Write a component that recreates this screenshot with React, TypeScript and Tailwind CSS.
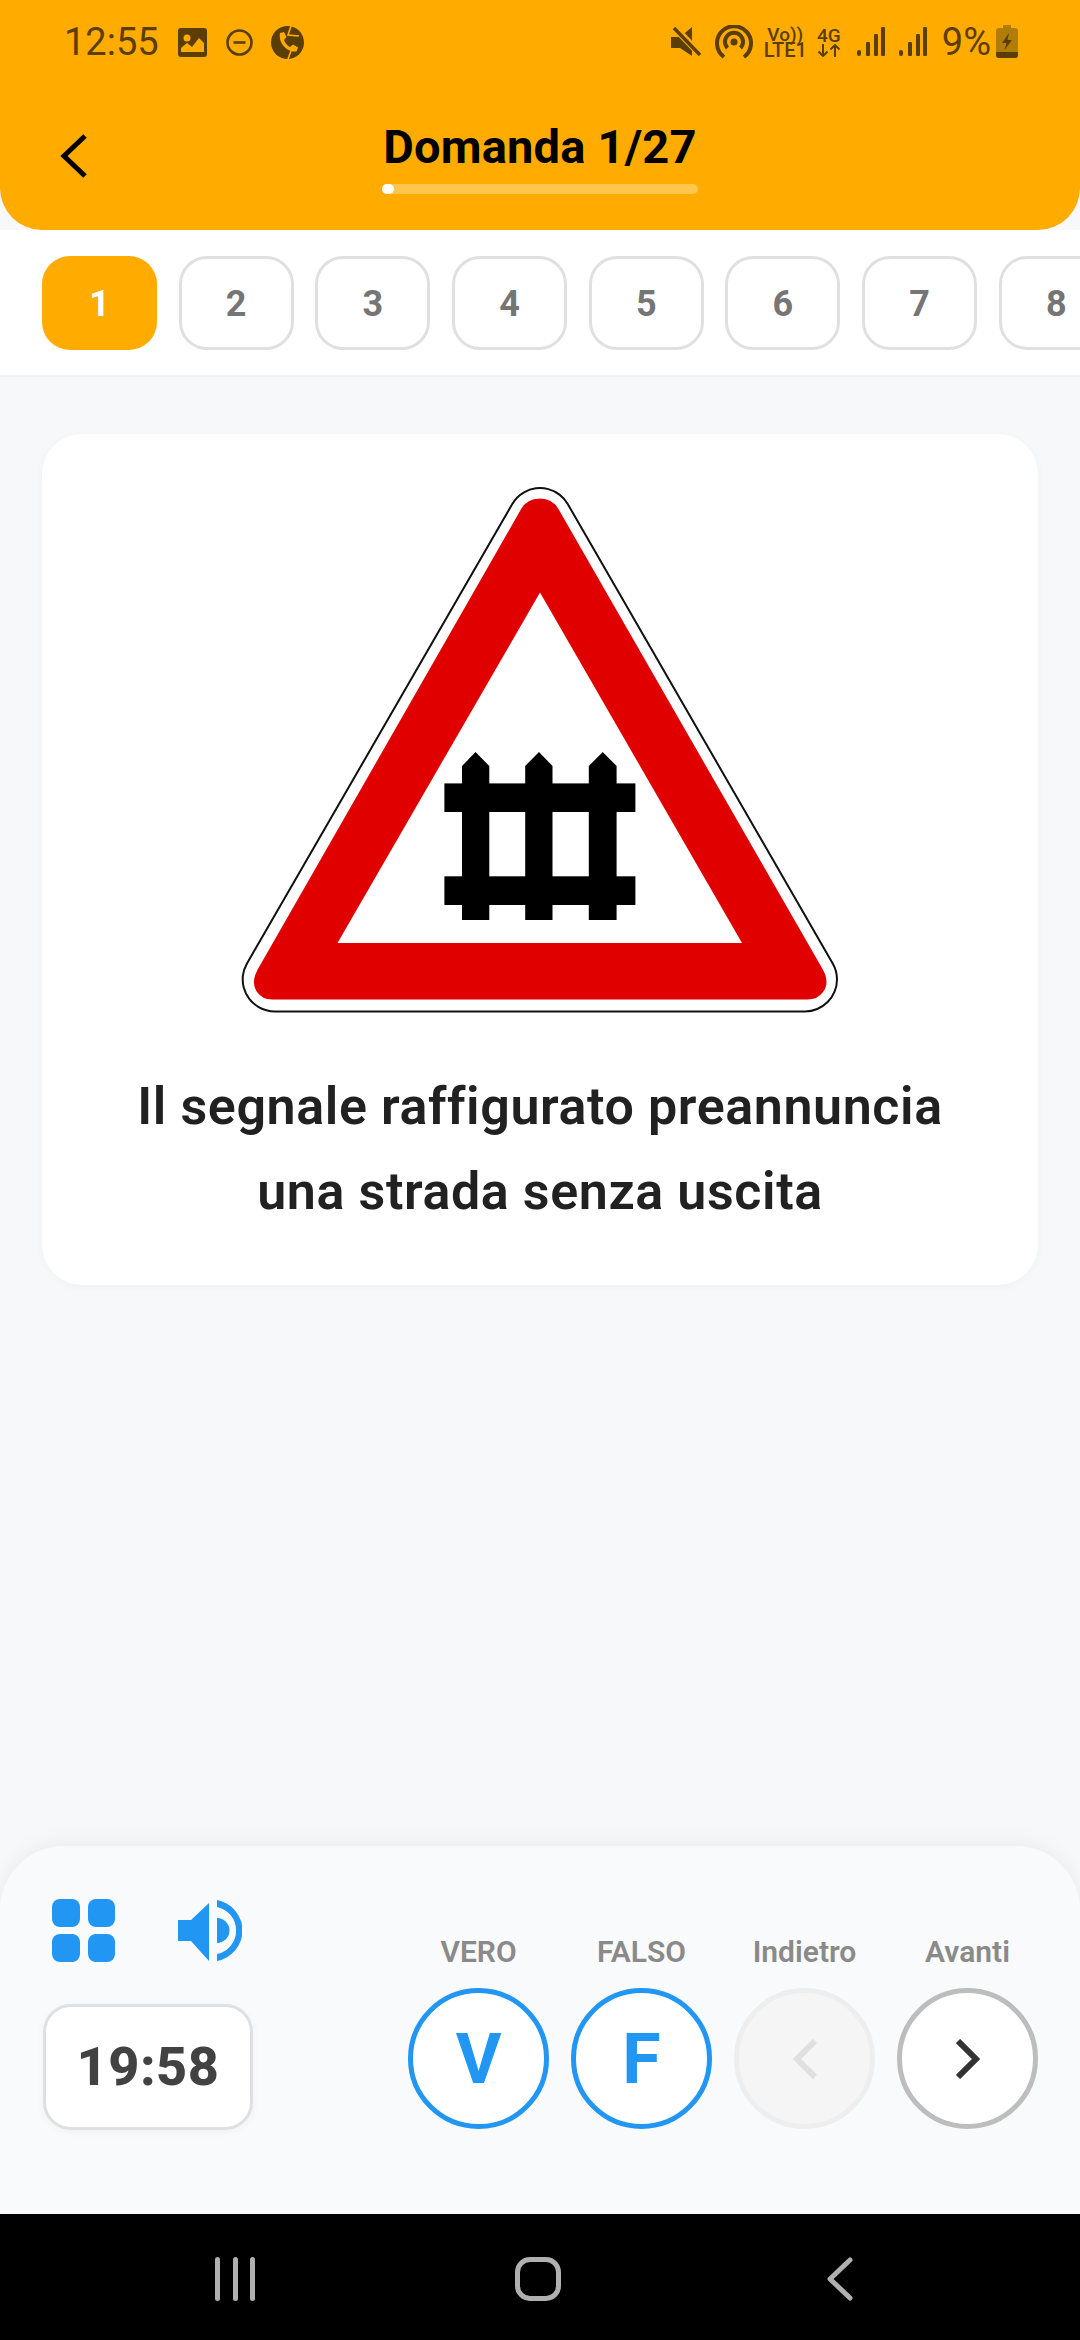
import { useState } from 'react';

const BROWN = '#5a3e06';
const BLUE = '#2196f3';
const tabs = [1, 2, 3, 4, 5, 6, 7, 8];

function Signal() {
  return (
    <svg width="28" height="30" viewBox="0 0 28 30" fill={BROWN}>
      <rect x="0" y="23" width="4" height="6" rx="2" />
      <rect x="9" y="15" width="4" height="14" rx="1" />
      <rect x="17" y="7" width="4" height="22" rx="1" />
      <rect x="24" y="0" width="4" height="29" rx="1" />
    </svg>
  );
}

function StatusBar() {
  return (
    <div className="flex h-[82px] items-center justify-between pl-[64px] pr-[62px] pt-[2px]">
      <div className="flex items-center">
        <span className="text-[38px] leading-none text-[#5a3e06]">12:55</span>
        <svg className="ml-[19px]" width="29" height="29" viewBox="0 0 29 29">
          <rect width="29" height="29" rx="3" fill={BROWN} />
          <circle cx="9" cy="10" r="3.5" fill="#ffab00" />
          <path d="M3 24 L3 20 L9 15 L14 19 L21 10 L26 15 L26 24 Z" fill="#ffab00" />
        </svg>
        <svg className="ml-[19px]" width="27" height="27" viewBox="0 0 27 27" fill="none" stroke={BROWN} strokeWidth="2.6">
          <circle cx="13.5" cy="13.5" r="12" />
          <path d="M7.5 13.5 H19.5" />
        </svg>
        <svg className="ml-[17px]" width="35" height="35" viewBox="0 0 33 35">
          <circle cx="16.5" cy="17.5" r="16.5" fill={BROWN} />
          <path d="M9 8 L13 7 L15.5 12 L13 15 C14 18 16 20.5 19 22 L22 19.5 L27 22.5 L25.5 26.5 C16 27.5 7 18 9 8 Z" fill="#ffab00" />
          <path d="M20 1 L17 10 L28 11 M17 34 L20 26" stroke="#ffab00" strokeWidth="1.6" fill="none" />
        </svg>
      </div>

      <div className="flex items-center">
        <svg width="30" height="30" viewBox="0 0 30 30">
          <path d="M0 10 H9 L21 0 V29 L9 21 H0 Z" fill={BROWN} />
          <path d="M3 0 L30 28" stroke="#ffab00" strokeWidth="7" />
          <path d="M3 1 L29 28" stroke={BROWN} strokeWidth="3.4" />
        </svg>
        <svg className="ml-[14px]" width="38" height="34" viewBox="0 0 38 34" fill="none" stroke={BROWN} strokeWidth="4">
          <path d="M9 32 A17 17 0 1 1 29 32" />
          <path d="M12.5 23 A9 9 0 1 1 25.5 23" />
          <circle cx="19" cy="17" r="3.5" fill={BROWN} stroke="none" />
        </svg>
        <div className="ml-[12px] flex w-[41px] flex-col items-center font-medium">
          <span className="text-[19px] leading-[15px] text-[#5a3e06]">Vo))</span>
          <span className="text-[20px] leading-[16px] text-[#5a3e06]">LTE1</span>
        </div>
        <div className="ml-[11px] flex w-[24px] flex-col items-center">
          <span className="text-[19px] font-medium leading-[16px] text-[#5a3e06]">4G</span>
          <svg width="24" height="13" viewBox="0 0 24 13" fill="none" stroke={BROWN} strokeWidth="2">
            <path d="M6 0 V12 M1.5 7.5 L6 12 L10.5 7.5" />
            <path d="M18 13 V1 M13.5 5.5 L18 1 L22.5 5.5" />
          </svg>
        </div>
        <div className="ml-[16px]"><Signal /></div>
        <div className="ml-[14px]"><Signal /></div>
        <span className="ml-[15px] text-[38px] leading-none text-[#5a3e06]">9%</span>
        <svg className="ml-[5px]" width="22" height="34" viewBox="0 0 22 34">
          <path d="M7 0 H15 V3 H19 Q22 3 22 6 V30 Q22 33 19 33 H3 Q0 33 0 30 V6 Q0 3 3 3 H7 Z" fill="#b07d08" />
          <path d="M0 27 H22 V30 Q22 33 19 33 H3 Q0 33 0 30 Z" fill={BROWN} />
          <path d="M13 8 L6 18 H10.5 L8.5 25 L16 15 H11.5 Z" fill={BROWN} />
        </svg>
      </div>
    </div>
  );
}

function Header() {
  return (
    <div className="relative h-[230px] shrink-0 rounded-b-[42px] bg-[#ffab00]">
      <StatusBar />
      <svg className="absolute left-[58px] top-[132px]" width="32" height="48" viewBox="0 0 32 48" fill="none" stroke="#000" strokeWidth="5">
        <path d="M27 4 L6 24 L27 44" />
      </svg>
      <div className="mt-[38px] flex flex-col items-center">
        <span className="text-[47px] font-bold leading-[54px] tracking-[0.2px] text-black">Domanda 1/27</span>
        <div className="mt-[10px] h-[10px] w-[316px] rounded-full bg-[#ffc64f]">
          <div className="h-full w-[12px] rounded-full bg-white" />
        </div>
      </div>
    </div>
  );
}

function QuestionTabs({ active, onPick }: { active: number; onPick: (n: number) => void }) {
  return (
    <div className="flex h-[147px] shrink-0 items-start gap-[21.7px] overflow-hidden border-b-2 border-[#f1f2f4] bg-white pl-[42px] pt-[26px]">
      {tabs.map((n) => (
        <button
          key={n}
          onClick={() => onPick(n)}
          className={`flex h-[94px] w-[115px] shrink-0 items-center justify-center rounded-[28px] pt-[2px] text-[36px] font-bold ${
            n === active ? 'bg-[#ffab00] text-white' : 'border-[3px] border-[#e0e0e0] bg-white text-[#757575]'
          }`}
        >
          {n}
        </button>
      ))}
    </div>
  );
}

function RoadSign() {
  // outline is concentric round corners, the red part has its own tighter corners
  const tri = '34.7,494.4 565,494.4 300,35';
  const red =
    'M17.5 484.8 L281 24.3 Q287 13.6 300 13.6 Q312.6 13.6 318.6 24.3 L583 484.8 Q590 498 583 507 Q578 514.4 567.5 514.4 L32 514.4 Q22 514.4 17 507 Q10.5 498 17.5 484.8 Z';
  return (
    <svg className="mx-auto block" width="600" height="530" viewBox="0 0 600 530">
      <polygon points={tri} fill="#111" stroke="#111" strokeWidth="66" strokeLinejoin="round" />
      <polygon points={tri} fill="#fff" stroke="#fff" strokeWidth="62" strokeLinejoin="round" />
      <path d={red} fill="#e00000" />
      <polygon points="97.5,458 502,458 300,107.5" fill="#fff" />
      <g fill="#000">
        <rect x="204.4" y="298.4" width="191" height="28.6" />
        <rect x="204.4" y="391.3" width="191" height="28.7" />
        <path d="M222 281 L235.5 267 L249.3 281 V435 H222 Z" />
        <path d="M285.2 281 L299 267 L312.5 281 V435 H285.2 Z" />
        <path d="M348.8 281 L362.7 267 L376.6 281 V435 H348.8 Z" />
      </g>
    </svg>
  );
}

function RoundButton({ label, children, className }: { label: string; children: React.ReactNode; className: string }) {
  return (
    <div className="flex w-[141px] flex-col items-center">
      <span className="whitespace-nowrap text-[30px] font-semibold leading-[33px] text-[#8a8a8a]">{label}</span>
      <div className={`mt-[20px] flex h-[141px] w-[141px] items-center justify-center rounded-full border-[5px] ${className}`}>
        {children}
      </div>
    </div>
  );
}

function BottomPanel() {
  return (
    <div className="flex h-[368px] shrink-0 justify-between rounded-t-[64px] bg-[#f9fafb] pl-[43px] pr-[42px] shadow-[0_-4px_20px_rgba(0,0,0,0.05)]">
      <div className="flex flex-col pt-[53px]">
        <div className="flex items-center pl-[9px]">
          <svg width="63" height="63" viewBox="0 0 63 63" fill={BLUE}>
            <rect x="0" y="0" width="28" height="28" rx="8" />
            <rect x="36" y="0" width="27" height="28" rx="8" />
            <rect x="0" y="35" width="28" height="28" rx="8" />
            <rect x="36" y="35" width="27" height="28" rx="8" />
          </svg>
          <svg className="ml-[63px]" width="64" height="63" viewBox="0 0 64 63" fill={BLUE}>
            <path d="M0 21 H13 L31 4 V62 L13 42 H0 Z" />
            <path d="M39 19 A12.5 12.5 0 0 1 39 44 Z" />
            <path d="M39 1 A31 31 0 0 1 39 62 V55 A24 24 0 0 0 39 8 Z" />
          </svg>
        </div>
        <div className="mt-[42px] flex h-[126px] w-[210px] items-center justify-center rounded-[28px] border-[3px] border-[#e0e0e0] bg-white pb-[2px] shadow-[0_2px_8px_rgba(0,0,0,0.04)]">
          <span className="text-[54px] font-extrabold tracking-[0.5px] text-[#424242]">19:58</span>
        </div>
      </div>

      <div className="flex gap-[22px] pt-[89px]">
        <RoundButton label="VERO" className="border-[#2196f3] bg-white">
          <span className="text-[70px] font-bold leading-none text-[#2196f3]">V</span>
        </RoundButton>
        <RoundButton label="FALSO" className="border-[#2196f3] bg-white">
          <span className="text-[70px] font-bold leading-none text-[#2196f3]">F</span>
        </RoundButton>
        <RoundButton label="Indietro" className="border-[#eeeeee] bg-[#f5f5f5]">
          <svg width="24" height="40" viewBox="0 0 24 40" fill="none" stroke="#e0e0e0" strokeWidth="6">
            <path d="M22 2 L4 20 L22 38" />
          </svg>
        </RoundButton>
        <RoundButton label="Avanti" className="border-[#bdbdbd] bg-white">
          <svg width="24" height="40" viewBox="0 0 24 40" fill="none" stroke="#333" strokeWidth="6">
            <path d="M2 2 L20 20 L2 38" />
          </svg>
        </RoundButton>
      </div>
    </div>
  );
}

function NavBar() {
  return (
    <div className="flex h-[126px] shrink-0 items-start bg-black pt-[43px]">
      <div className="ml-[215px] flex h-[44px] w-[40px] justify-between">
        <div className="w-[5px] rounded-full bg-[#b0b0b0]" />
        <div className="w-[5px] rounded-full bg-[#b0b0b0]" />
        <div className="w-[5px] rounded-full bg-[#b0b0b0]" />
      </div>
      <div className="ml-[260px] h-[44px] w-[46px] rounded-[15px] border-[5px] border-[#b0b0b0]" />
      <svg className="ml-[266px]" width="26" height="44" viewBox="0 0 26 44" fill="none" stroke="#b0b0b0" strokeWidth="5" strokeLinecap="round" strokeLinejoin="round">
        <path d="M23 3 L3 22 L23 41" />
      </svg>
    </div>
  );
}

export default function App() {
  const [active, setActive] = useState(1);

  return (
    <div className="flex h-[2340px] w-[1080px] flex-col overflow-hidden bg-[#f7f8fa] font-['Roboto',sans-serif]">
      <Header />
      <QuestionTabs active={active} onPick={setActive} />

      <div className="flex-1 px-[42px] pt-[57px]">
        <div className="rounded-[40px] bg-white pb-[51px] pt-[51px] shadow-[0_2px_10px_rgba(0,0,0,0.03)]">
          <RoadSign />
          <p className="mt-[49px] text-center text-[52px] font-semibold leading-[85px] tracking-[0.6px] text-[#212121]">
            Il segnale raffigurato preannuncia
            <br />
            una strada senza uscita
          </p>
        </div>
      </div>

      <BottomPanel />
      <NavBar />
    </div>
  );
}
